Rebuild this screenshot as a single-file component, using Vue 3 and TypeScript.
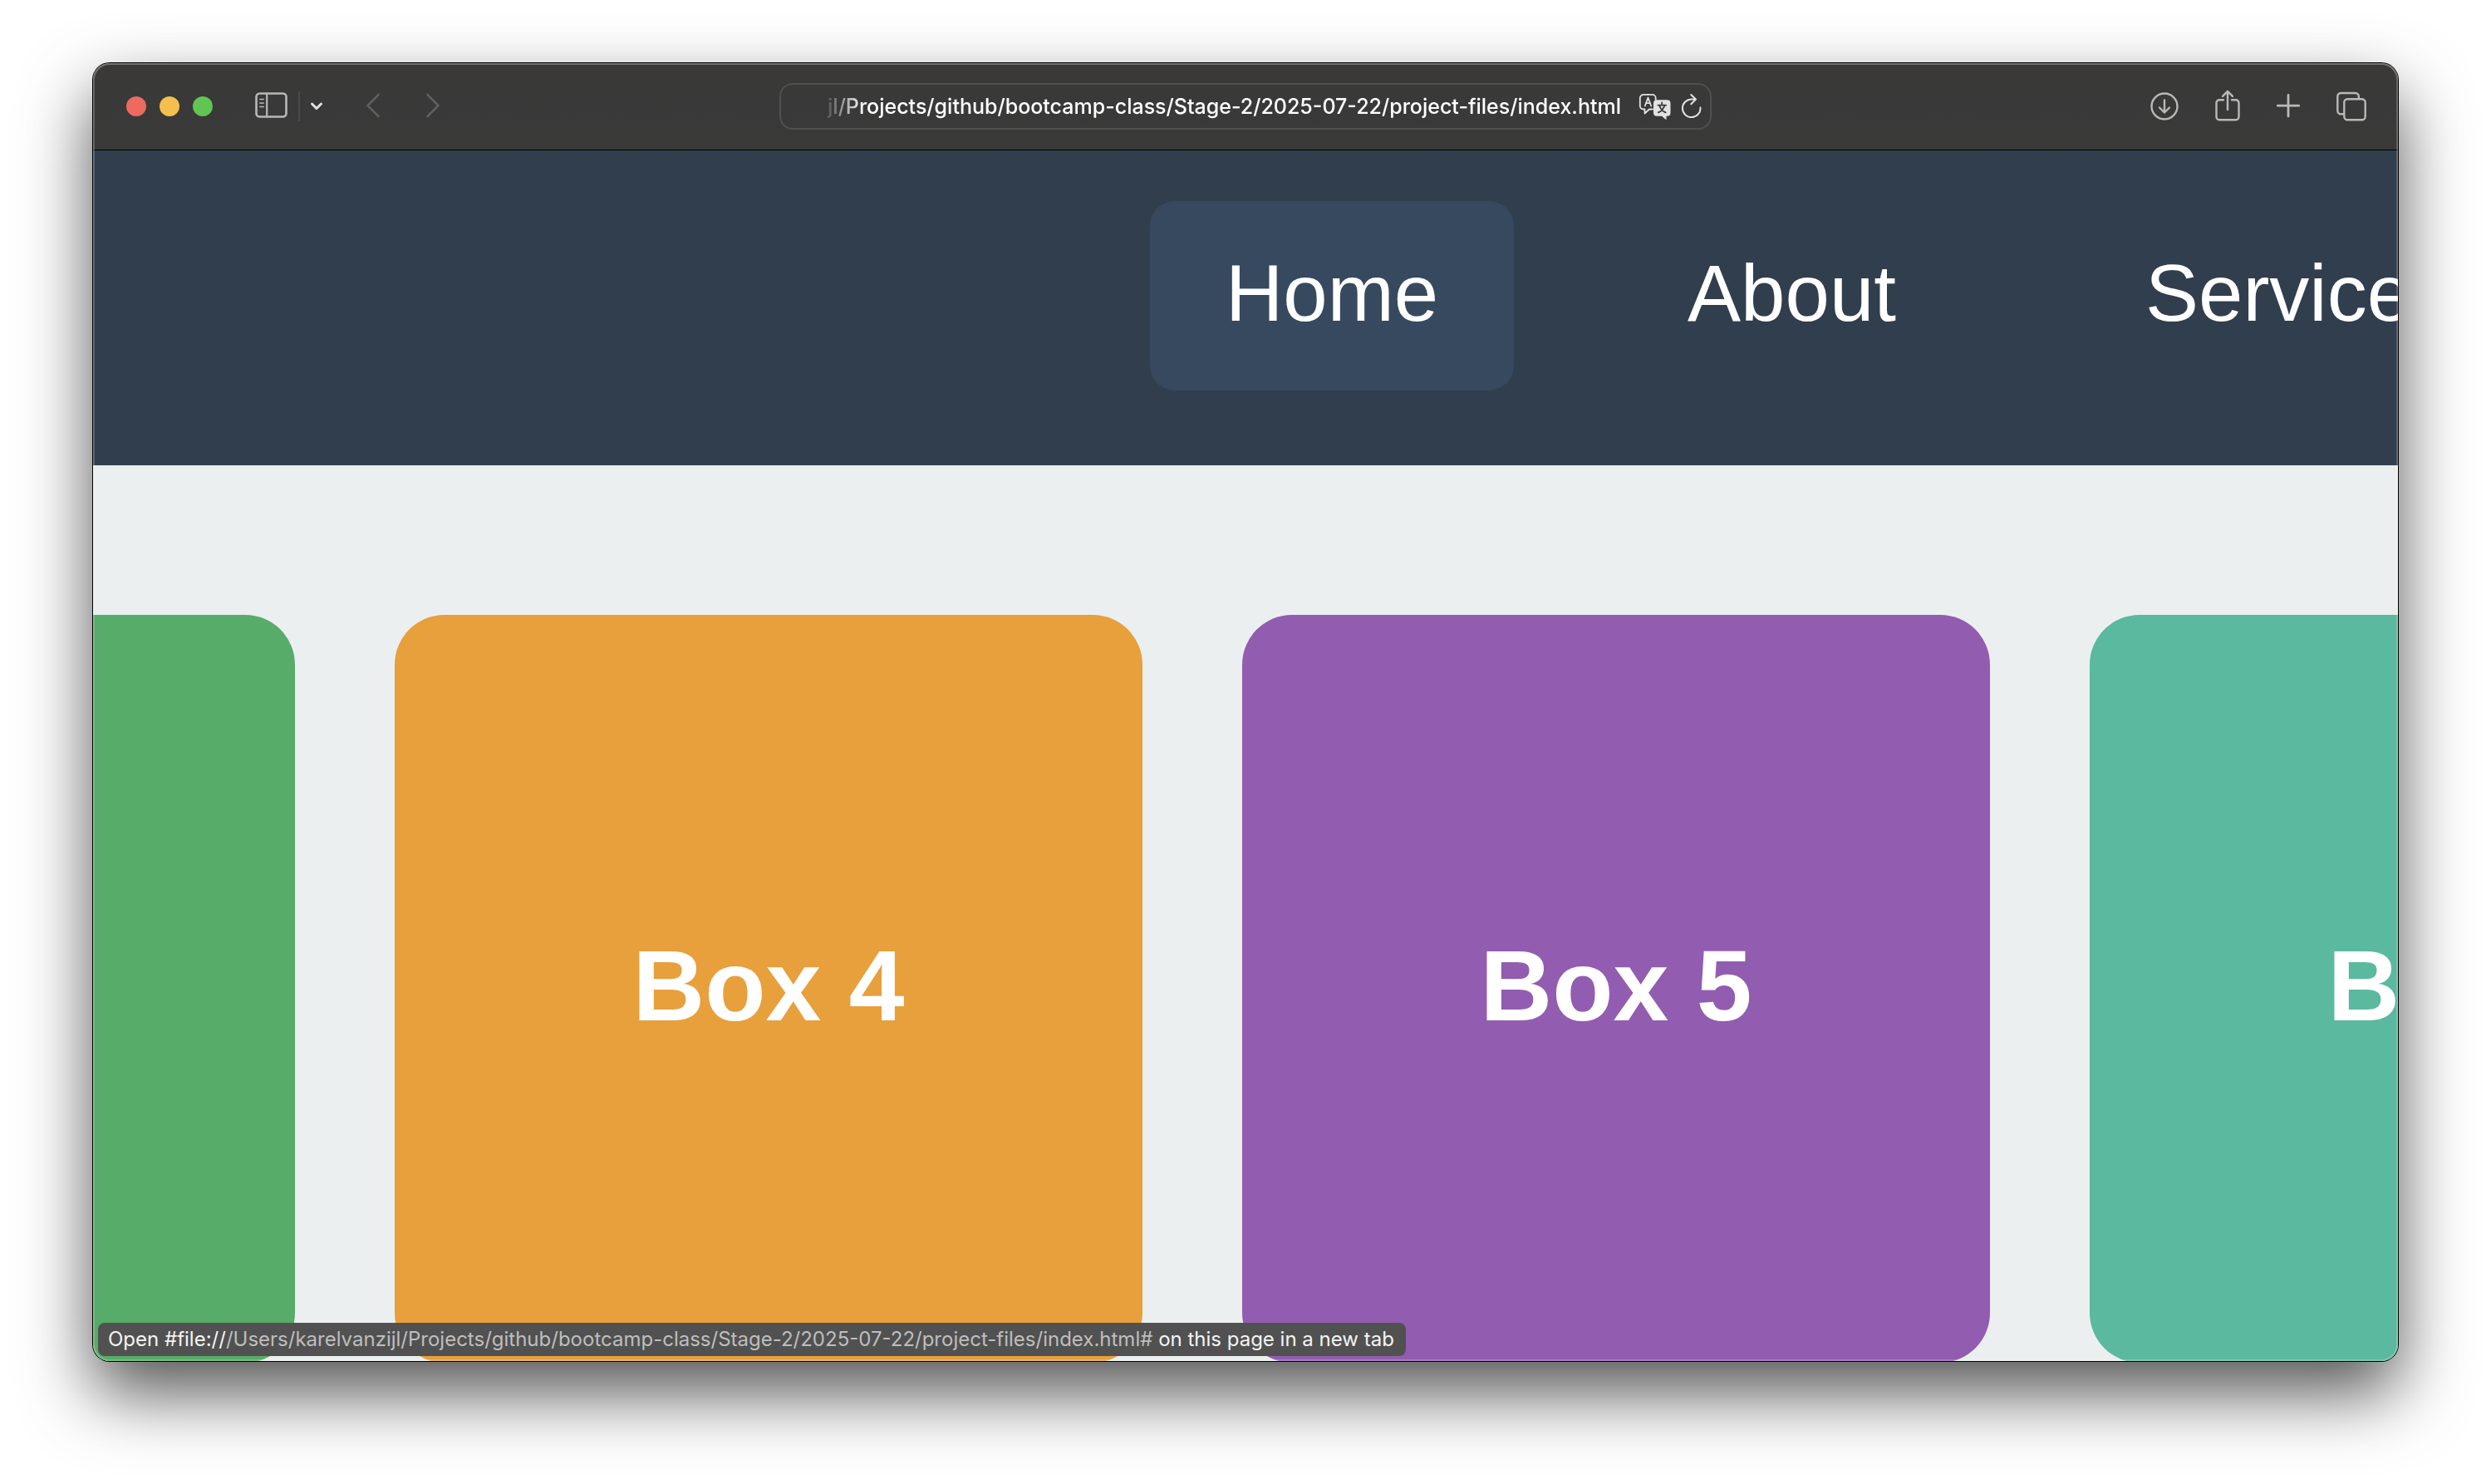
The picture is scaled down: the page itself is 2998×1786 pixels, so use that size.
<script setup lang="ts">
import { ref } from 'vue'

interface Box {
  label: string
  tone: string
}

const address = ref('jl/Projects/github/bootcamp-class/Stage-2/2025-07-22/project-files/index.html')
const links: string[] = ['Home', 'About', 'Services']
const hovered = ref('Home')
const boxes: Box[] = [
  { label: '', tone: 'green' },
  { label: 'Box 4', tone: 'orange' },
  { label: 'Box 5', tone: 'purple' },
  { label: 'Box 6', tone: 'teal' },
]
</script>

<template>
  <div class="desktop">
    <div class="window">
      <div class="toolbar">
        <div class="group left">
          <div class="lights">
            <button class="light close" aria-label="Close"></button>
            <button class="light minimise" aria-label="Minimise"></button>
            <button class="light zoom" aria-label="Zoom"></button>
          </div>
          <div class="sidebar-tools">
            <button class="tool" aria-label="Show sidebar">
              <svg width="40" height="34" viewBox="0 0 40 34">
                <rect x="1.5" y="1.5" width="36" height="28" rx="4" stroke-width="2.6" />
                <path d="M14.2 2v27" stroke-width="2.2" />
                <path d="M5.8 8.500h4.400M5.8 13h4.400M5.8 17.500h4.400" stroke-width="1.6" />
              </svg>
            </button>
            <span class="divider"></span>
            <button class="tool bright" aria-label="Tab groups">
              <svg width="16" height="12" viewBox="0 0 16 12">
                <path d="M2.500 3l5.500 5.500L13.500 3" stroke-width="3" />
              </svg>
            </button>
          </div>
          <div class="history">
            <button class="tool dim" aria-label="Back" disabled>
              <svg width="18" height="32" viewBox="0 0 18 32">
                <path d="M15.500 2L2.500 15l13 13" stroke-width="2.600" />
              </svg>
            </button>
            <button class="tool dim" aria-label="Forward" disabled>
              <svg width="18" height="32" viewBox="0 0 18 32">
                <path d="M2.500 2l13 13-13 13" stroke-width="2.600" />
              </svg>
            </button>
          </div>
        </div>

        <div class="address">
          <input v-model="address" class="url" type="text" aria-label="Address" spellcheck="false" />
          <button class="tool bright" aria-label="Translate">
            <svg width="40" height="32" viewBox="0 0 40 32">
              <path d="M17 19.500h-4l-5.500 5v-5H6a4.200 4.200 0 0 1-4.200-4.200V6A4.200 4.200 0 0 1 6 1.800h10.500A4.200 4.200 0 0 1 20.700 6v2" stroke-width="1.800" />
              <path d="M7.800 15.500L11.500 5.500l3.700 10M9 12.200h5" stroke-width="1.800" />
              <path class="solid" d="M22 8.200h12.500a4 4 0 0 1 4 4v11.600a4 4 0 0 1-4 4h-1v4.600l-5.500-4.600h-6a4 4 0 0 1-4-4V12.200a4 4 0 0 1 4-4z" />
              <path class="knock" d="M28.200 11.500v2.500M23.500 14.700h9.600M25.300 15c1 3.600 3.600 6.800 7.300 8.300M31.300 15c-1 3.600-3.700 6.800-7.400 8.300" stroke-width="1.800" />
            </svg>
          </button>
          <button class="tool bright" aria-label="Reload">
            <svg width="26" height="32" viewBox="0 0 26 32">
              <path d="M23.500 17.500A10.800 10.800 0 1 1 12.700 7.500h4.600" stroke-width="2" />
              <path d="M12.300 2l5.700 5.500-5.700 5.700" stroke-width="2" />
            </svg>
          </button>
        </div>

        <div class="group right">
          <button class="tool" aria-label="Downloads">
            <svg width="34" height="40" viewBox="0 0 34 40">
              <circle cx="17" cy="20" r="15.500" stroke-width="2.400" />
              <path d="M17 12.500v14.500M11 21.500l6 6 6-6" stroke-width="2.400" />
            </svg>
          </button>
          <button class="tool" aria-label="Share">
            <svg width="30" height="40" viewBox="0 0 30 40">
              <path d="M10 12.300H5a3.500 3.500 0 0 0-3.500 3.500v17A3.500 3.500 0 0 0 5 36.300h20a3.500 3.500 0 0 0 3.500-3.500v-17a3.500 3.500 0 0 0-3.500-3.500h-5" stroke-width="2.400" />
              <path d="M15 24V2M9 7.800l6-6 6 6" stroke-width="2.400" />
            </svg>
          </button>
          <button class="tool" aria-label="New tab">
            <svg width="28" height="40" viewBox="0 0 28 40">
              <path d="M14 6.500v25.500M1.300 19.200h25.400" stroke-width="2.800" />
            </svg>
          </button>
          <button class="tool" aria-label="Tab overview">
            <svg width="36" height="40" viewBox="0 0 36 40">
              <rect x="9.300" y="11.300" width="25.400" height="25" rx="4" stroke-width="2.400" />
              <path d="M9 29.300H5.300a4 4 0 0 1-4-4V8a4 4 0 0 1 4-4h17.500a4 4 0 0 1 4 4v3" stroke-width="2.400" />
            </svg>
          </button>
        </div>
      </div>

      <div class="page">
        <header class="site-header">
          <nav class="nav">
            <a v-for="link in links" :key="link" href="#" :class="['nav-link', { hovered: link === hovered }]">{{ link }}</a>
          </nav>
        </header>
        <main class="boxes">
          <div v-for="box in boxes" :key="box.tone" :class="['box', box.tone]">{{ box.label }}</div>
        </main>
      </div>

      <div class="status">
        <span class="strong">Open #file://</span>/Users/karelvanzijl/Projects/github/bootcamp-class/Stage-2/2025-07-22/project-files/index.html#<span class="strong"> on this page in a new tab</span>
      </div>
    </div>
  </div>
</template>

<style>
body {
  background: #ffffff;
}
</style>

<style scoped>
.desktop {
  box-sizing: border-box;
  height: 100vh;
  padding: 76px 112px 148px;
  overflow: hidden;
  display: flex;
}

.window {
  position: relative;
  flex: 1;
  min-width: 0;
  display: flex;
  flex-direction: column;
  overflow: hidden;
  border-radius: 20px;
  background: #ebeff0;
  box-shadow: 0 0 0 1px #000000, 0 38px 84px rgba(0, 0, 0, 0.68);
}

/* light rim along the inner edge of the window */
.window::after {
  content: '';
  position: absolute;
  inset: 0;
  border-radius: 20px;
  box-shadow: inset 0 0 0 2px rgba(255, 255, 255, 0.2), inset 0 1px 0 1px rgba(255, 255, 255, 0.12);
  pointer-events: none;
}

.toolbar {
  flex: none;
  display: grid;
  grid-template-columns: 1fr minmax(0, 1122px) 1fr;
  align-items: center;
  height: 104px;
  background: linear-gradient(#3a3937, #393939 50%, #393a38);
  border-bottom: 1px solid #000000;
}

.group {
  display: flex;
  align-items: center;
}

.left {
  padding-left: 40px;
  gap: 51px;
}

.right {
  justify-content: flex-end;
  padding-right: 38px;
  gap: 44px;
}

.lights {
  display: flex;
  gap: 16px;
}

.light {
  width: 24px;
  height: 24px;
  padding: 0;
  border: 0;
  border-radius: 50%;
}

.close {
  background: #ed6a5e;
}

.minimise {
  background: #f4bf4f;
}

.zoom {
  background: #61c554;
}

.sidebar-tools {
  display: flex;
  align-items: center;
  gap: 12px;
}

.history {
  display: flex;
  gap: 54px;
}

.divider {
  width: 2px;
  height: 36px;
  background: #4b4b4b;
}

.tool {
  display: block;
  flex: none;
  padding: 0;
  border: 0;
  background: none;
  color: #b9b9b8;
}

.tool svg {
  display: block;
  fill: none;
  stroke: currentColor;
  stroke-linecap: round;
  stroke-linejoin: round;
}

.tool .solid {
  fill: currentColor;
  stroke: none;
}

.tool .knock {
  stroke: #393939;
}

.bright {
  color: #e2e2e2;
}

.dim {
  color: #5f5f5e;
}

.address {
  box-sizing: border-box;
  display: flex;
  align-items: center;
  gap: 11px;
  height: 56px;
  padding: 0 9px 0 48px;
  border: 2px solid #505050;
  border-radius: 16px;
}

.url {
  flex: 1;
  min-width: 0;
  height: 48px;
  padding: 0 10px 0 0;
  border: 0;
  outline: 0;
  background: none;
  color: #ffffff;
  font: 500 25px Inter, sans-serif;
  text-align: right;
  mask-image: linear-gradient(90deg, transparent, #000000 52px);
}

.page {
  flex: 1;
  min-height: 0;
  overflow: hidden;
  font-family: 'Liberation Sans', Arial, sans-serif;
  color: #ffffff;
}

.site-header {
  padding: 61px 0 90px;
  background: #313e4e;
}

.nav {
  display: flex;
  gap: 118px;
  margin-left: calc(50% - 115px);
}

.nav-link {
  flex: none;
  padding: 57px 91px 63px;
  border-radius: 30px;
  color: #ffffff;
  font-size: 96px;
  line-height: 108px;
  text-decoration: none;
}

.hovered {
  background: #37495e;
}

.boxes {
  display: flex;
  gap: 120px;
  margin: 180px 0 0 calc(50% - 2044px);
}

.box {
  box-sizing: border-box;
  flex: none;
  display: flex;
  align-items: center;
  justify-content: center;
  width: 900px;
  height: 900px;
  padding-bottom: 8px;
  border-radius: 60px;
  font-size: 120px;
  font-weight: 700;
}

.green {
  background: #56ac68;
}

.orange {
  background: #e7a03c;
}

.purple {
  background: #925db0;
}

.teal {
  background: #5ab99f;
}

.status {
  position: absolute;
  left: 6px;
  bottom: 6px;
  padding: 0 14px 0 12px;
  border-radius: 8px;
  background: #515151;
  color: #bebebe;
  font: 400 24px/40px Inter, sans-serif;
  white-space: nowrap;
}

.strong {
  color: #f4f4f4;
  white-space: pre;
}
</style>
